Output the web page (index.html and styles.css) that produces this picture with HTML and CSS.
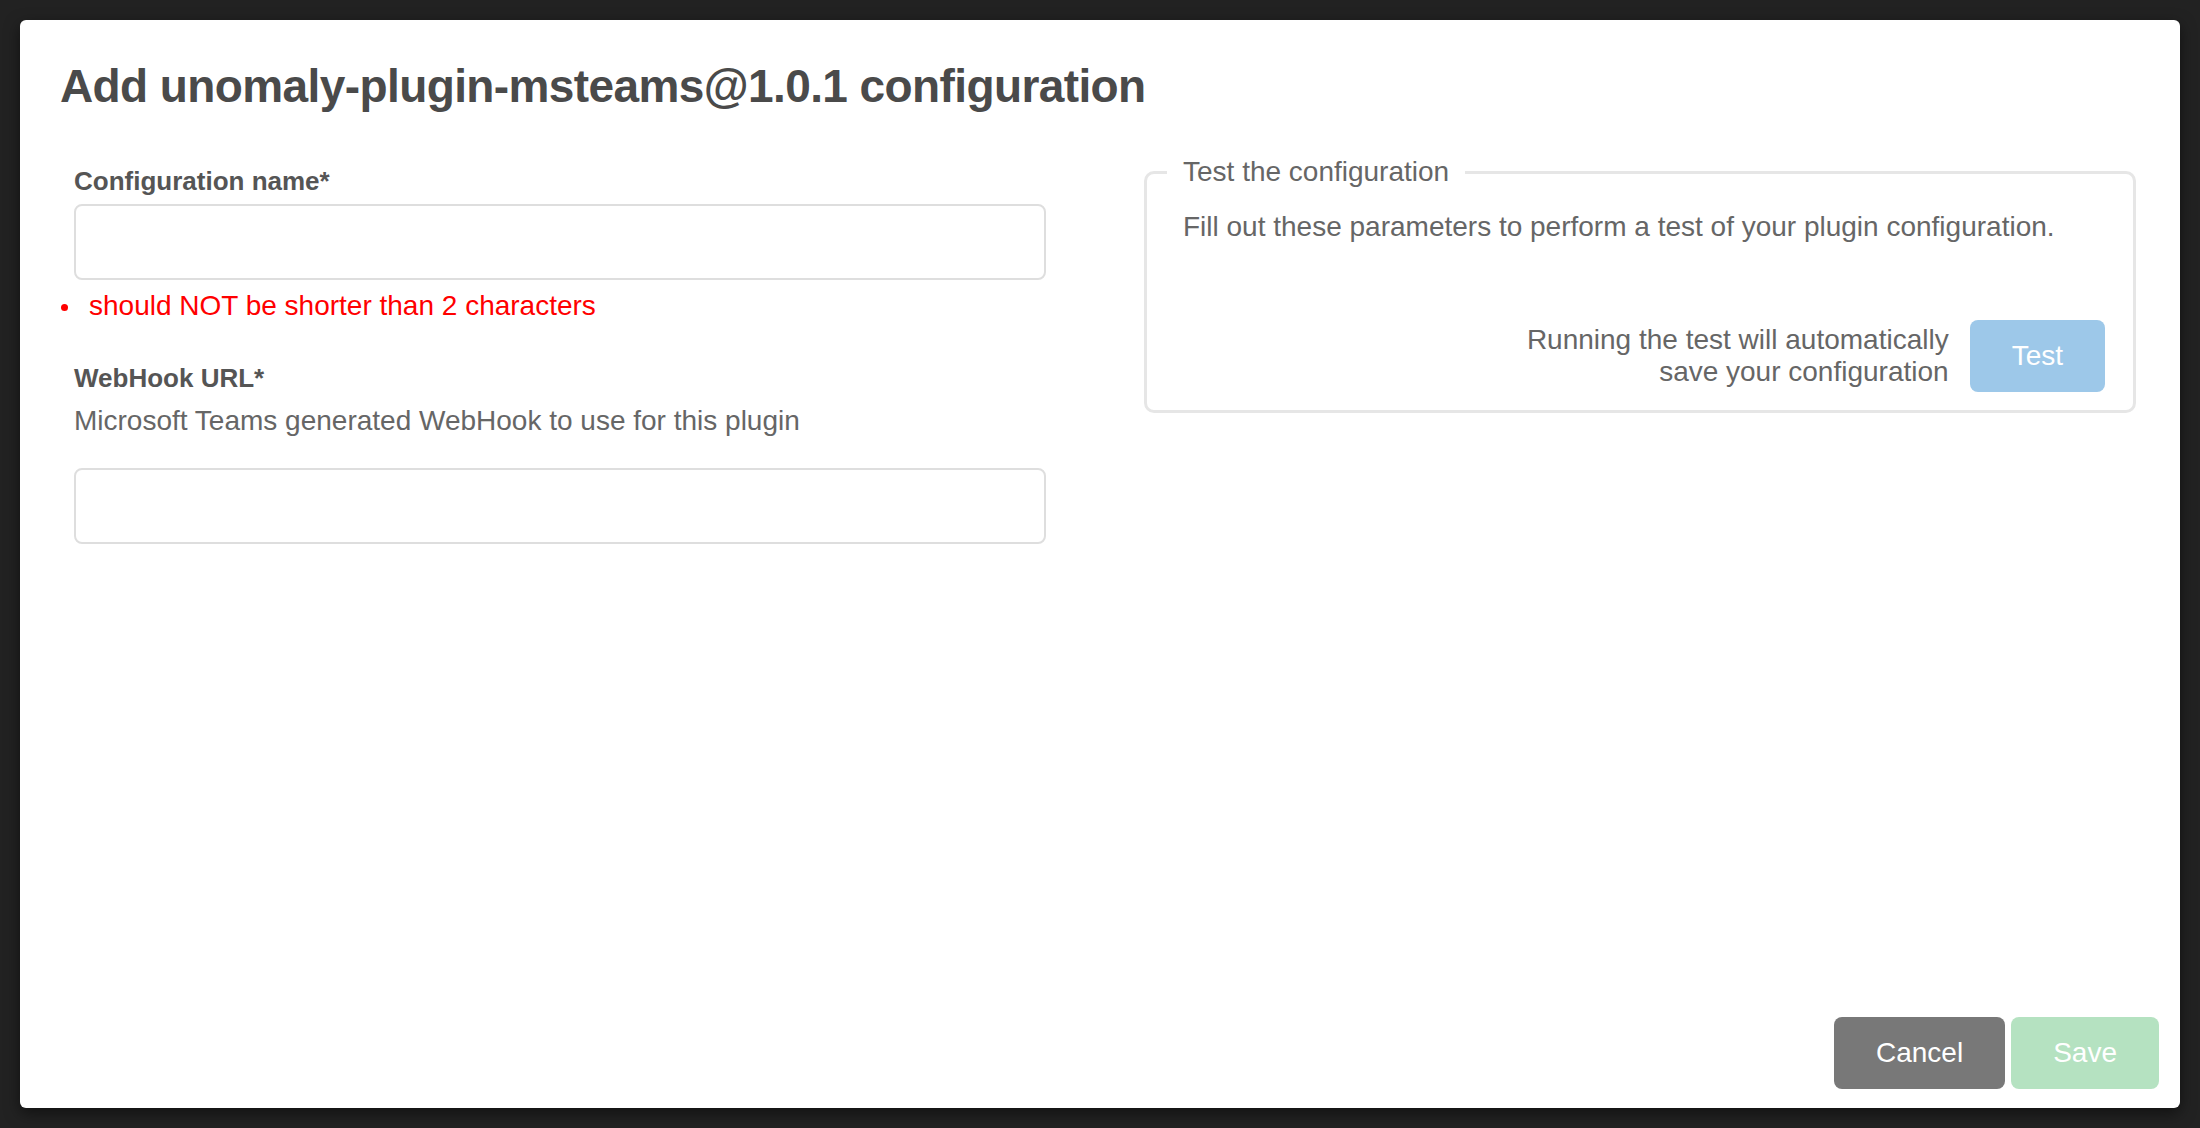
FILE: index.html
```html
<!DOCTYPE html>
<html lang="en">
<head>
<meta charset="utf-8">
<title>Add configuration</title>
<link rel="stylesheet" href="styles.css">
</head>
<body>
<div class="modal">
  <h1 class="modal-title">Add unomaly-plugin-msteams@1.0.1 configuration</h1>
  <div class="modal-body">
    <div class="form-col">
      <label class="field-label">Configuration name*</label>
      <input class="text-input" type="text">
      <ul class="errors"><li>should NOT be shorter than 2 characters</li></ul>
      <label class="field-label field-label-second">WebHook URL*</label>
      <p class="field-desc">Microsoft Teams generated WebHook to use for this plugin</p>
      <input class="text-input text-input-second" type="text">
    </div>
    <fieldset class="test-box">
      <legend class="test-legend">Test the configuration</legend>
      <p class="test-intro">Fill out these parameters to perform a test of your plugin configuration.</p>
      <div class="test-row">
        <p class="test-note">Running the test will automatically<br>save your configuration</p>
        <button class="btn btn-test" disabled>Test</button>
      </div>
    </fieldset>
  </div>
  <div class="modal-footer">
    <button class="btn btn-cancel">Cancel</button>
    <button class="btn btn-save" disabled>Save</button>
  </div>
</div>
</body>
</html>
```
FILE: styles.css
```css
html, body {
  margin: 0;
  height: 100%;
}
body {
  background: #222222;
  padding: 20px;
  box-sizing: border-box;
  font-family: "Liberation Sans", Arial, Helvetica, sans-serif;
}
.modal {
  height: 1088px;
  background: #ffffff;
  border-radius: 6px;
  box-shadow: 0 5px 15px rgba(0, 0, 0, 0.5);
  display: flex;
  flex-direction: column;
  padding: 38px 21px 19px 40px;
  box-sizing: border-box;
}
.modal-title {
  margin: 0;
  font-size: 46px;
  line-height: 56px;
  letter-spacing: -0.6px;
  font-weight: bold;
  color: #4a4a4a;
}
.modal-body {
  display: grid;
  grid-template-columns: 1000px 992px;
  column-gap: 84px;
  margin-top: 42px;
  align-items: start;
}
.form-col {
  padding: 9px 14px 0;
  display: flex;
  flex-direction: column;
}
.field-label {
  display: block;
  font-size: 26px;
  line-height: 32px;
  font-weight: bold;
  color: #555555;
}
.field-label-second {
  margin-top: 40px;
}
.text-input {
  display: block;
  width: 100%;
  height: 76px;
  box-sizing: border-box;
  margin: 7px 0 0;
  padding: 0 20px;
  border: 2px solid #dedede;
  border-radius: 8px;
  background: #fff;
  font: inherit;
  font-size: 28px;
  outline: none;
}
.text-input-second {
  margin-top: 31px;
}
.errors {
  list-style: none;
  margin: 10px 0 0 -13px;
  padding: 0;
  color: #ff0000;
  font-size: 28px;
  line-height: 32px;
}
.errors li::before {
  content: "";
  display: inline-block;
  width: 7px;
  height: 7px;
  border-radius: 50%;
  background: #ff0000;
  margin-right: 21px;
  vertical-align: middle;
}
.field-desc {
  margin: 11px 0 0;
  font-size: 28px;
  line-height: 32px;
  color: #666666;
}
.test-box {
  margin: 0;
  min-width: 0;
  border: 3px solid #e6e6e6;
  border-radius: 10px;
  padding: 0 28px 18px 20px;
}
.test-legend {
  padding: 0 16px;
  font-size: 28px;
  line-height: 32px;
  color: #666666;
}
.test-intro {
  margin: 23px 0 0 16px;
  font-size: 28px;
  line-height: 32px;
  color: #666666;
}
.test-row {
  display: flex;
  justify-content: flex-end;
  align-items: center;
  gap: 21px;
  margin-top: 77px;
}
.test-note {
  margin: 0;
  text-align: right;
  font-size: 28px;
  line-height: 32px;
  color: #666666;
}
.btn {
  height: 72px;
  border: 0;
  border-radius: 8px;
  padding: 0 42px;
  font-family: inherit;
  font-size: 28px;
  color: #ffffff;
  cursor: pointer;
}
.btn-test {
  background: #9dc8e9;
  padding: 0 42px;
}
.modal-footer {
  margin-top: auto;
  display: flex;
  justify-content: flex-end;
  gap: 6px;
}
.btn-cancel {
  background: #787878;
}
.btn-save {
  background: #b5e2c1;
}
```
